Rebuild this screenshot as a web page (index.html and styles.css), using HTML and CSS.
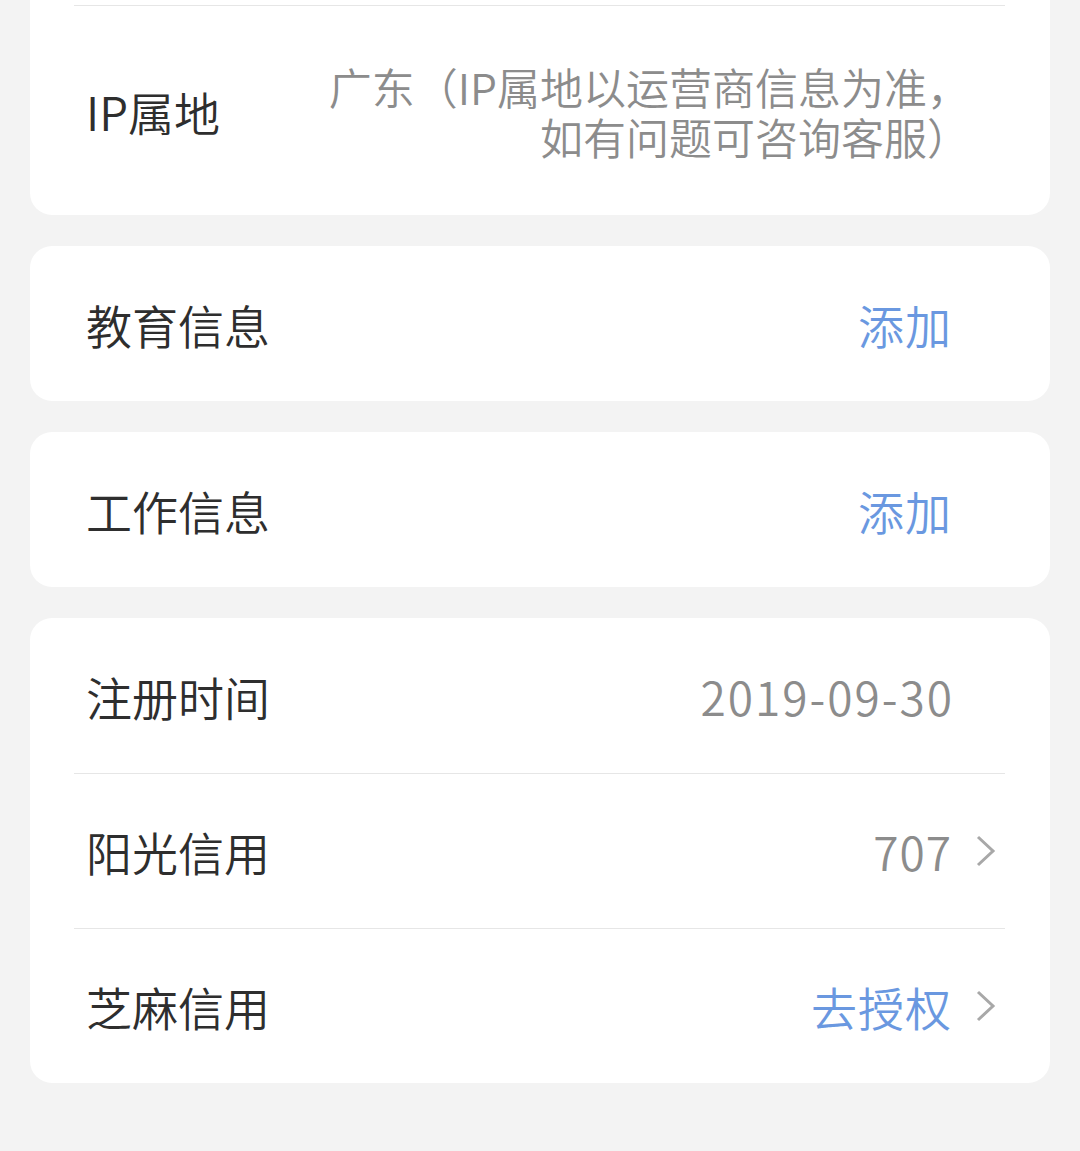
FILE: index.html
```html
<!DOCTYPE html>
<html lang="zh-CN">
<head>
    <meta charset="UTF-8">
    <meta name="viewport" content="width=device-width, initial-scale=1.0">
    <title>个人资料</title>
    <link rel="stylesheet" href="styles.css">
</head>
<body>
    <div class="page">
        <div class="card card-cut">
            <div class="row row-tall">
                <span class="label">IP属地</span>
                <span class="value value-multi">广东（IP属地以运营商信息为准，<br>如有问题可咨询客服）</span>
            </div>
        </div>

        <div class="card">
            <div class="row">
                <span class="label">教育信息</span>
                <span class="value link">添加</span>
                <span class="arrow"></span>
            </div>
        </div>

        <div class="card">
            <div class="row">
                <span class="label">工作信息</span>
                <span class="value link">添加</span>
                <span class="arrow"></span>
            </div>
        </div>

        <div class="card">
            <div class="row">
                <span class="label">注册时间</span>
                <span class="value date">2019-09-30</span>
                <span class="arrow"></span>
            </div>
            <div class="row">
                <span class="label">阳光信用</span>
                <span class="value">707</span>
                <span class="arrow">
                    <svg width="22" height="34" viewBox="0 0 22 34"><path d="M3 3 L18 17 L3 31" fill="none" stroke="#a8a8a8" stroke-width="3"/></svg>
                </span>
            </div>
            <div class="row">
                <span class="label">芝麻信用</span>
                <span class="value link">去授权</span>
                <span class="arrow">
                    <svg width="22" height="34" viewBox="0 0 22 34"><path d="M3 3 L18 17 L3 31" fill="none" stroke="#a8a8a8" stroke-width="3"/></svg>
                </span>
            </div>
        </div>
    </div>
</body>
</html>
```

FILE: styles.css
```css
body {
    margin: 0;
    padding: 0;
    background-color: #f3f3f3;
    font-family: "Noto Sans CJK SC", "Noto Sans", sans-serif;
    font-weight: 350;
}

.page {
    display: flex;
    flex-direction: column;
    gap: 31px;
    padding: 0 30px 66px;
}

.card {
    background-color: #ffffff;
    border-radius: 22px;
}

/* first card is scrolled partly out of view */
.card-cut {
    margin-top: -20px;
    padding-top: 26px;
    border-radius: 0 0 22px 22px;
}

.card-cut::before {
    content: "";
    display: block;
    margin: -1px 45px 0 44px;
    border-top: 1px solid #e6e6e6;
}

.row {
    position: relative;
    display: flex;
    align-items: center;
    min-height: 155px;
    padding: 0 45px 0 56px;
    box-sizing: border-box;
}

.row + .row::before {
    content: "";
    position: absolute;
    top: 0;
    left: 44px;
    right: 45px;
    border-top: 1px solid #e6e6e6;
}

.row-tall {
    min-height: 209px;
    padding-right: 80px;
}

.label {
    flex: none;
    font-size: 46px;
    color: #2e2e2e;
}

.value {
    margin-left: auto;
    font-size: 46px;
    color: #8c8c8c;
    text-align: right;
    letter-spacing: 1px;
}

.date {
    letter-spacing: 2px;
    margin-right: -2px;
}

.value-multi {
    font-size: 43px;
    line-height: 50px;
    letter-spacing: 0;
}

.link {
    color: #6a98e0;
}

.arrow {
    flex: none;
    width: 53px;
    display: flex;
    justify-content: flex-end;
    padding-right: 8px;
    box-sizing: border-box;
}
```
